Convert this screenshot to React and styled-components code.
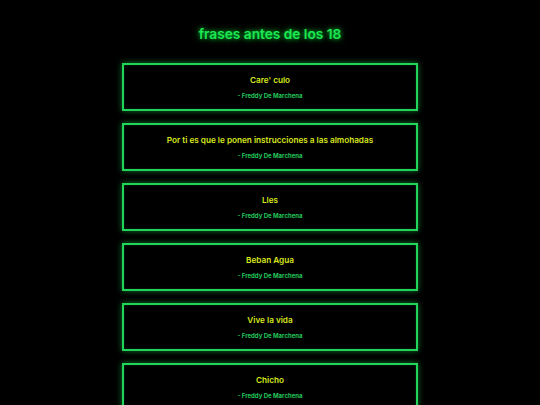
import React from "react";
import styled, { createGlobalStyle } from "styled-components";

const GlobalStyle = createGlobalStyle`
  html, body {
    margin: 0;
    padding: 0;
    background: #000;
  }
  body {
    font-family: Inter, "DejaVu Sans", sans-serif;
  }
`;

const Page = styled.main`
  display: flex;
  flex-direction: column;
  align-items: center;
  padding-top: 25px;
  min-height: 100vh;
  box-sizing: border-box;
`;

const Title = styled.h1`
  margin: 0 0 20px;
  font-size: 13.7px;
  line-height: 18px;
  font-weight: 600;
  color: #1ee84f;
  text-shadow: 0 0 4px rgba(0, 255, 80, 0.7), 0 0 8px rgba(0, 255, 80, 0.4);
`;

const List = styled.div`
  display: flex;
  flex-direction: column;
  gap: 12px;
  width: 296px;
`;

const Card = styled.div`
  box-sizing: border-box;
  height: 48px;
  border: 2px solid #22d35a;
  box-shadow: 0 0 6px rgba(34, 230, 90, 0.5), inset 0 0 2px rgba(34, 230, 90, 0.3);
  display: flex;
  flex-direction: column;
  align-items: center;
  padding-top: 10px;
  gap: 6px;
`;

const Quote = styled.p`
  margin: 0;
  font-size: 8.2px;
  line-height: 11px;
  font-weight: 600;
  color: #d8e81a;
`;

const Author = styled.span`
  font-size: 6px;
  line-height: 8px;
  font-weight: 700;
  color: #22c65a;
`;

const quotes = [
  "Care' culo",
  "Por ti es que le ponen instrucciones a las almohadas",
  "Lles",
  "Beban Agua",
  "Vive la vida",
  "Chicho",
];

export default function App() {
  return (
    <>
      <GlobalStyle />
      <Page>
        <Title>frases antes de los 18</Title>
        <List>
          {quotes.map((q) => (
            <Card key={q}>
              <Quote>{q}</Quote>
              <Author>- Freddy De Marchena</Author>
            </Card>
          ))}
        </List>
      </Page>
    </>
  );
}
